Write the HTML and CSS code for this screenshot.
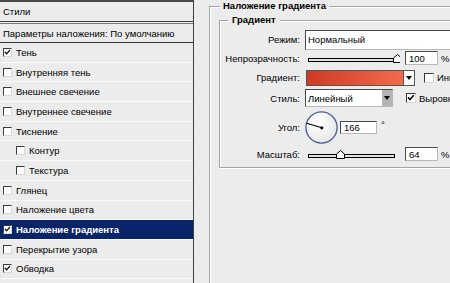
FILE: index.html
```html
<!DOCTYPE html>
<html>
<head>
    <meta charset="utf-8">
    <title>Стиль слоя</title>
    <link rel="stylesheet" href="styles.css">
</head>
<body>
    <div class="dlg">
        <div class="styles">
            <div class="head">Стили</div>
            <div class="split"></div>
            <div class="blend">Параметры наложения: По умолчанию</div>
            <div class="item"><span class="cb"><svg viewBox="0 0 9 9"><path d="M1.2 3.6 L3.3 6.2 L7.6 1.4"/></svg></span>Тень</div>
            <div class="item"><span class="cb"></span>Внутренняя тень</div>
            <div class="item"><span class="cb"></span>Внешнее свечение</div>
            <div class="item"><span class="cb"></span>Внутреннее свечение</div>
            <div class="item"><span class="cb"></span>Тиснение</div>
            <div class="item sub"><span class="cb"></span>Контур</div>
            <div class="item sub"><span class="cb"></span>Текстура</div>
            <div class="item"><span class="cb"></span>Глянец</div>
            <div class="item"><span class="cb"></span>Наложение цвета</div>
            <div class="item sel"><span class="cb"><svg viewBox="0 0 9 9"><path d="M1.2 3.6 L3.3 6.2 L7.6 1.4"/></svg></span>Наложение градиента</div>
            <div class="item"><span class="cb"></span>Перекрытие узора</div>
            <div class="item"><span class="cb"><svg viewBox="0 0 9 9"><path d="M1.2 3.6 L3.3 6.2 L7.6 1.4"/></svg></span>Обводка</div>
            <div class="item"></div>
        </div>

        <div class="main">
            <fieldset class="grp outer">
                <legend>Наложение градиента</legend>
                <fieldset class="grp inner">
                    <legend>Градиент</legend>
                    <div class="form">
                        <div class="lbl">Режим:</div>
                        <div class="ctl"><span class="field mode">Нормальный</span></div>

                        <div class="lbl">Непрозрачность:</div>
                        <div class="ctl">
                            <svg class="slider" width="92" height="9" viewBox="0 0 92 9">
                                <rect x="0.5" y="4.5" width="89" height="3" fill="#e2e2e2" stroke="#000"/>
                                <polygon points="85.5,8.5 85.5,4 89.5,0.5 93.5,4 93.5,8.5" fill="#fff" stroke="#000"/>
                            </svg>
                            <span class="field num">100</span><span class="unit">%</span>
                        </div>

                        <div class="lbl">Градиент:</div>
                        <div class="ctl">
                            <span class="swatch"></span><span class="arrow"></span>
                            <span class="cb big"></span><span class="opt">Инвертировать</span>
                        </div>

                        <div class="lbl">Стиль:</div>
                        <div class="ctl">
                            <span class="field kind">Линейный<span class="drop"></span></span>
                            <span class="cb big on"><svg viewBox="0 0 9 9"><path d="M1.2 3.6 L3.3 6.2 L7.6 1.4"/></svg></span><span class="opt">Выровнять по слою</span>
                        </div>

                        <div class="lbl">Угол:</div>
                        <div class="ctl">
                            <svg class="dial" width="33" height="33" viewBox="0 0 33 33">
                                <defs>
                                    <radialGradient id="face" cx="0.4" cy="0.35" r="0.7">
                                        <stop offset="0" stop-color="#ffffff"/>
                                        <stop offset="1" stop-color="#e6e6e6"/>
                                    </radialGradient>
                                </defs>
                                <circle cx="16.5" cy="16.5" r="15.6" fill="url(#face)" stroke="#4d5e8f" stroke-width="1.3"/>
                                <line x1="16.8" y1="16.8" x2="1.6" y2="12.2" stroke="#000" stroke-width="1.1"/>
                                <circle cx="16.8" cy="16.8" r="1.6" fill="#000"/>
                            </svg>
                            <span class="field ang">166</span><span class="deg">°</span>
                        </div>

                        <div class="lbl">Масштаб:</div>
                        <div class="ctl">
                            <svg class="slider" width="92" height="9" viewBox="0 0 92 9">
                                <rect x="0.5" y="4.5" width="86" height="3" fill="#e2e2e2" stroke="#000"/>
                                <polygon points="28.5,8.5 28.5,4 32.5,0.5 36.5,4 36.5,8.5" fill="#fff" stroke="#000"/>
                            </svg>
                            <span class="field num">64</span><span class="unit">%</span>
                        </div>
                    </div>
                </fieldset>
            </fieldset>
        </div>
    </div>
</body>
</html>
```

FILE: styles.css
```css
*
{
    margin: 0px;
    padding: 0px;
    box-sizing: border-box;
}
body
{
    width: 450px;
    height: 283px;
    overflow: hidden;
    background-color: #ececec;
    color: #000;
    font-family: "Liberation Sans", Arial, sans-serif;
    font-size: 9.5px;
}
.dlg
{
    display: flex;
    height: 283px;
}

/* left list of styles */
.styles
{
    width: 194px;
    flex: none;
    height: 283px;
    overflow: hidden;
    border-top: 2px solid #4a4a4a;
    border-right: 1px solid #3d3d3d;
}
.head
{
    height: 19px;
    padding-left: 3px;
    display: flex;
    align-items: center;
}
.split
{
    height: 3px;
    background-color: #f4f4f4;
    border-top: 1px solid #3a3a3a;
    border-bottom: 1px solid #777;
}
.blend
{
    height: 19px;
    padding-left: 3px;
    display: flex;
    align-items: center;
    border-bottom: 1px solid #333;
}
.item
{
    height: 19.7px;
    padding-left: 3px;
    display: flex;
    align-items: center;
    gap: 4px;
    white-space: nowrap;
    border-bottom: 1px solid #fbfbfb;
}
.item.sub
{
    padding-left: 16px;
}
.item.sel
{
    background-color: #0a246a;
    color: #fff;
    font-weight: bold;
}
.cb
{
    width: 9px;
    height: 9px;
    flex: none;
    background-color: #fff;
    border: 1px solid;
    border-color: #3c3c3c #d8d8d8 #d8d8d8 #3c3c3c;
    display: flex;
}
.cb svg
{
    width: 100%;
    height: 100%;
}
.cb path
{
    fill: none;
    stroke: #000;
    stroke-width: 1.7;
}
.cb.big
{
    width: 10px;
    height: 10px;
}

/* right side */
.main
{
    flex: 1;
    overflow: hidden;
    padding-left: 15px;
}
.grp
{
    min-width: 0;
    border: 1px solid #a4a4a4;
    box-shadow: 1px 1px 0 #fff, inset 1px 1px 0 #fff;
}
.grp legend
{
    font-weight: bold;
    line-height: 12px;
    background-color: #ececec;
}
.outer
{
    width: 300px;
    height: 330px;
    padding: 2px 0 0 9px;
}
.outer > legend
{
    margin-left: 1px;
    padding: 0 3px;
}
.inner
{
    width: 270px;
    padding: 3px 0 6px 0;
}
.inner > legend
{
    margin-left: 8px;
    padding: 0 4px;
}
.form
{
    display: grid;
    grid-template-columns: 80px auto;
    grid-template-rows: 21px 16px 23px 18px 40px 14px;
    column-gap: 5px;
    align-items: center;
}
.lbl
{
    text-align: right;
    white-space: nowrap;
}
.ctl
{
    display: flex;
    align-items: center;
    white-space: nowrap;
}
.field
{
    display: flex;
    align-items: center;
    background-color: #fff;
    border: 1px solid;
    border-color: #4a4a4a #b8b8b8 #b8b8b8 #4a4a4a;
    padding-left: 3px;
}
.mode
{
    width: 160px;
    height: 20px;
    padding-left: 2px;
}
.slider
{
    margin-left: 3px;
    margin-top: 1px;
    flex: none;
}
.num
{
    width: 33px;
    height: 14px;
    margin-left: 5px;
}
.unit
{
    margin-left: 3px;
}
.swatch
{
    width: 98px;
    height: 16px;
    margin-left: 1px;
    border: 1px solid #555;
    background: linear-gradient(to right, #cf3a24, #f06c4c);
}
.arrow,
.drop
{
    width: 11px;
    height: 16px;
    flex: none;
    display: flex;
    align-items: center;
    justify-content: center;
    background-color: #fff;
    border: 1px solid #555;
    border-left: none;
}
.arrow::after,
.drop::after
{
    content: "";
    border-top: 4px solid #000;
    border-left: 3px solid transparent;
    border-right: 3px solid transparent;
}
.arrow + .cb
{
    margin-left: 9px;
}
.opt
{
    margin-left: 3px;
}
.kind
{
    width: 88px;
    height: 18px;
    padding-left: 2px;
    justify-content: space-between;
    padding-right: 0;
}
.drop
{
    height: 16px;
    background-color: #b4b4b4;
    border: none;
    border-left: 1px solid #fff;
}
.kind + .cb
{
    margin-left: 13px;
}
.dial
{
    flex: none;
}
.ang
{
    width: 37px;
    height: 13px;
    margin-left: 2px;
}
.deg
{
    margin-left: 4px;
    align-self: flex-start;
    margin-top: 8px;
}
```
